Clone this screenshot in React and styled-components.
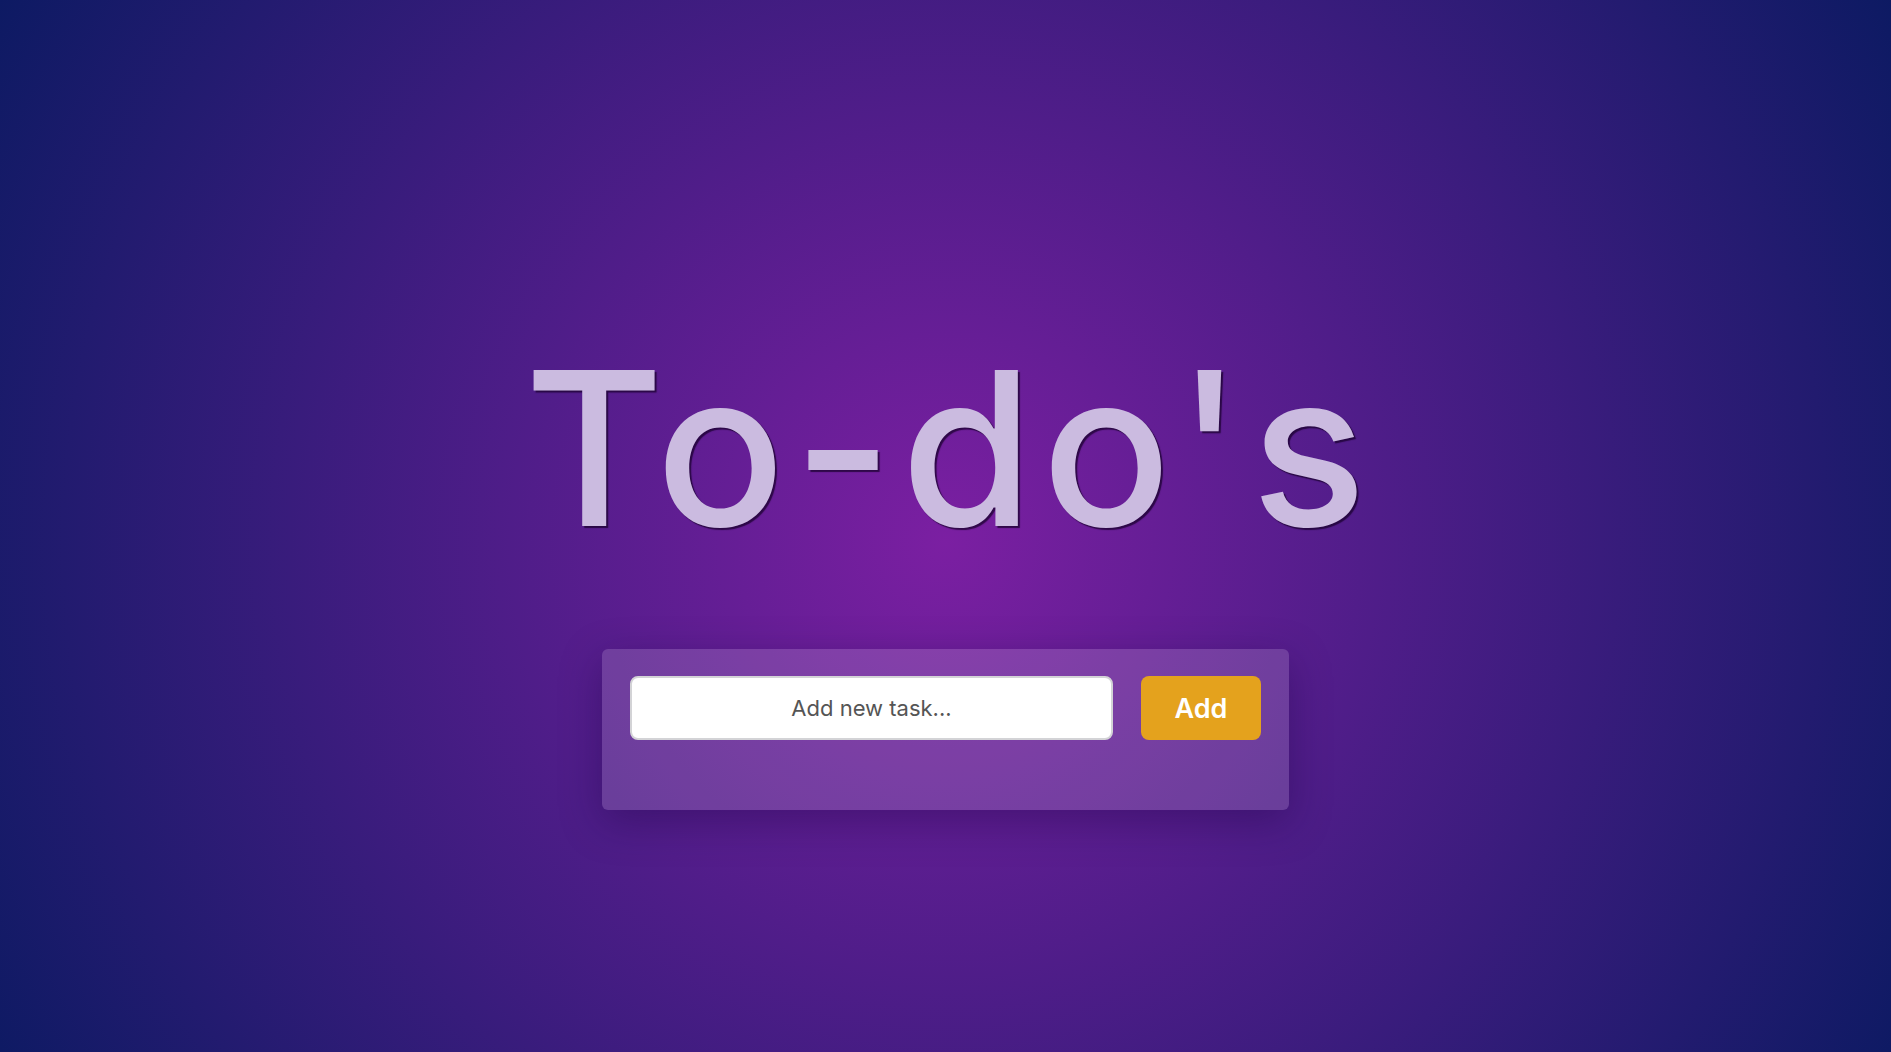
import React, { useState } from "react";
import styled, { createGlobalStyle } from "styled-components";

const GlobalStyle = createGlobalStyle`
  html, body {
    margin: 0;
    padding: 0;
    height: 100%;
  }
  body {
    font-family: "Inter", "Open Sans", sans-serif;
    background: radial-gradient(circle at 50% 51.5%, #7b1fa2 0%, #0d1a63 100%);
    background-attachment: fixed;
    min-height: 100vh;
  }
  #root {
    min-height: 100vh;
  }
`;

const Page = styled.main`
  min-height: 100vh;
  display: flex;
  flex-direction: column;
  align-items: center;
  padding-top: 342px;
  box-sizing: border-box;
`;

const Title = styled.h1`
  margin: 0 0 93px;
  padding-left: 8px;
  font-family: "Inter", "Open Sans", sans-serif;
  font-weight: 500;
  font-size: 214px;
  line-height: 1;
  letter-spacing: 8.5px;
  color: #cbbbe0;
  text-shadow: 2px 2px 1px rgba(25, 0, 45, 0.75);
`;

const Card = styled.section`
  width: 687px;
  box-sizing: border-box;
  padding: 27px 28px 0;
  background: rgba(255, 255, 255, 0.15);
  border-radius: 6px;
  box-shadow: 0 12px 40px rgba(20, 0, 60, 0.35);
`;

const Form = styled.form`
  display: flex;
  align-items: stretch;
  gap: 28px;
`;

const TaskInput = styled.input`
  flex: 1;
  height: 64px;
  box-sizing: border-box;
  border: 2px solid #d3d3d6;
  border-radius: 8px;
  background: #ffffff;
  font-family: "Inter", "Open Sans", sans-serif;
  font-size: 22px;
  text-align: center;
  color: #333;
  outline: none;
  &::placeholder {
    color: #555555;
  }
`;

const AddButton = styled.button`
  width: 120px;
  height: 64px;
  border: none;
  border-radius: 8px;
  background: #e4a21d;
  color: #ffffff;
  font-family: "Inter", "Open Sans", sans-serif;
  font-size: 27px;
  font-weight: 600;
  cursor: pointer;
`;

const TaskList = styled.ul`
  list-style: none;
  margin: 0;
  padding: 0;
  min-height: 70px;
`;

export default function App() {
  const [text, setText] = useState("");
  const [tasks, setTasks] = useState([]);
  const submit = (e) => {
    e.preventDefault();
    if (!text.trim()) return;
    setTasks([...tasks, text.trim()]);
    setText("");
  };
  return (
    <>
      <GlobalStyle />
      <Page>
        <Title>To-do's</Title>
        <Card>
          <Form onSubmit={submit}>
            <TaskInput
              placeholder="Add new task..."
              value={text}
              onChange={(e) => setText(e.target.value)}
            />
            <AddButton type="submit">Add</AddButton>
          </Form>
          <TaskList>
            {tasks.map((t, i) => (
              <li key={i}>{t}</li>
            ))}
          </TaskList>
        </Card>
      </Page>
    </>
  );
}
